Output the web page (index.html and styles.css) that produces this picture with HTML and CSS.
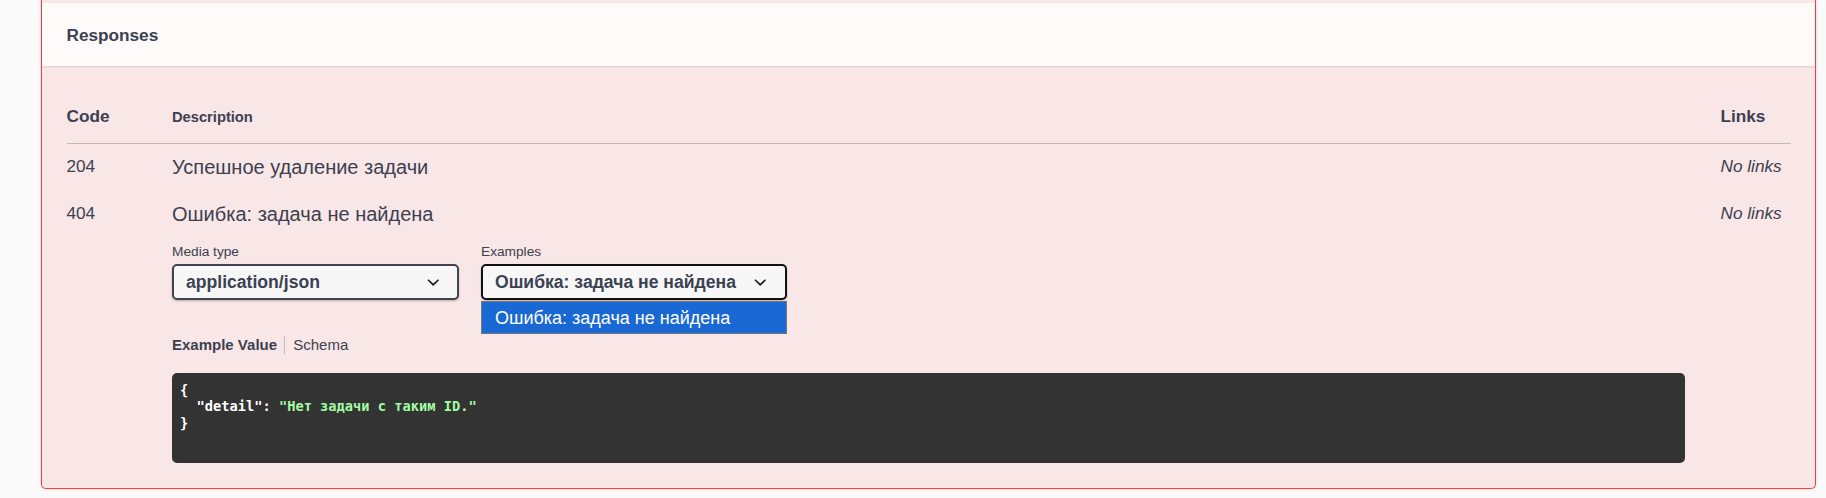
FILE: index.html
```html
<!DOCTYPE html>
<html lang="ru">
<head>
<meta charset="utf-8">
<title>Responses</title>
<link rel="stylesheet" href="styles.css">
</head>
<body>
<div class="card">
  <div class="section-header"><h4 class="title">Responses</h4></div>
  <div class="responses">
    <div class="row head">
      <div class="col-code">Code</div>
      <div class="col-desc">Description</div>
      <div class="col-links">Links</div>
    </div>
    <div class="row">
      <div class="col-code">204</div>
      <div class="col-desc"><p class="desc">Успешное удаление задачи</p></div>
      <div class="col-links"><i class="nolinks">No links</i></div>
    </div>
    <div class="row">
      <div class="col-code">404</div>
      <div class="col-desc">
        <p class="desc">Ошибка: задача не найдена</p>
        <div class="controls">
          <div class="control">
            <div class="label">Media type</div>
            <div class="select media">
              <span>application/json</span>
              <svg class="chev" viewBox="0 0 20 20" width="24.5" height="24.5"><path d="M13.418 7.859a.695.695 0 01.978 0 .68.68 0 010 .969l-3.908 3.83a.697.697 0 01-.979 0l-3.908-3.83a.68.68 0 010-.969.695.695 0 01.978 0L10 11l3.418-3.141z"/></svg>
            </div>
          </div>
          <div class="control examples-control">
            <div class="label">Examples</div>
            <div class="select examples">
              <span>Ошибка: задача не найдена</span>
              <svg class="chev" viewBox="0 0 20 20" width="24.5" height="24.5"><path d="M13.418 7.859a.695.695 0 01.978 0 .68.68 0 010 .969l-3.908 3.83a.697.697 0 01-.979 0l-3.908-3.83a.68.68 0 010-.969.695.695 0 01.978 0L10 11l3.418-3.141z"/></svg>
            </div>
            <div class="dropdown">Ошибка: задача не найдена</div>
          </div>
        </div>
        <div class="tabs">
          <span class="tab active">Example Value</span>
          <span class="sep"></span>
          <span class="tab">Schema</span>
        </div>
<pre class="code">{
  <span class="k">"detail"</span>: <span class="s">"Нет задачи с таким ID."</span>
}</pre>
      </div>
      <div class="col-links"><i class="nolinks">No links</i></div>
    </div>
  </div>
</div>
</body>
</html>
```

FILE: styles.css
```css
html, body {
  margin: 0;
  padding: 0;
  background: #fafafa;
}

body {
  font-family: "Liberation Sans", Arial, sans-serif;
  color: #3b4151;
  height: 498px;
  overflow: hidden;
}

.card {
  margin: 0 0 0 41px;
  width: 1775px;
  box-sizing: border-box;
  padding-top: 3px;
  background: rgba(249, 62, 62, 0.1);
  border: 1px solid #f93e3e;
  border-top: none;
  border-radius: 0 0 5px 5px;
  box-shadow: 0 0 3px rgba(0, 0, 0, 0.19);
}

.section-header {
  height: 63px;
  box-sizing: border-box;
  display: flex;
  align-items: center;
  padding: 0 24.5px;
  background: rgba(255, 255, 255, 0.8);
  box-shadow: 0 1px 2px rgba(0, 0, 0, 0.1);
}

.title {
  margin: 0;
  font-size: 17.2px;
  font-weight: 700;
  line-height: 20px;
}

.responses {
  padding: 0 24.5px 13.25px;
}

.row {
  display: grid;
  grid-template-columns: 105.5px 1fr 70px;
  align-items: start;
  padding: 12px 0;
}

.row.head {
  align-items: baseline;
  padding: 40px 0 16px;
  border-bottom: 1px solid #c5b8bb;
}

.col-code {
  font-size: 17.2px;
  line-height: 20px;
}

.head .col-code,
.head .col-links {
  font-weight: 700;
}

.head .col-desc {
  font-size: 14.7px;
  line-height: 20px;
  font-weight: 700;
}

.head .col-links {
  font-size: 17.2px;
  line-height: 20px;
}

.nolinks {
  font-size: 17.2px;
  line-height: 20px;
  font-style: italic;
}

.desc {
  margin: 0;
  font-size: 20px;
  line-height: 23px;
}

.controls {
  display: flex;
  gap: 22px;
  margin-top: 18.25px;
}

.control {
  position: relative;
}

.label {
  font-size: 13.7px;
  line-height: 16px;
  margin-bottom: 4px;
}

.select {
  height: 36px;
  box-sizing: border-box;
  display: flex;
  align-items: center;
  justify-content: space-between;
  padding: 0 12px;
  background: #f7f7f7;
  border: 2px solid #41444e;
  border-radius: 5px;
  box-shadow: 0 1px 2px 0 rgba(0, 0, 0, 0.25);
  font-size: 17.6px;
  font-weight: 700;
  line-height: 20px;
}

.select.media {
  width: 287px;
}

.select.examples {
  gap: 12.5px;
  border-color: #111;
}

.chev {
  display: block;
  flex: none;
  fill: #222;
}

.dropdown {
  position: absolute;
  top: 100%;
  left: 0;
  right: 0;
  margin-top: 1px;
  height: 33px;
  box-sizing: border-box;
  display: flex;
  align-items: center;
  padding-left: 13px;
  background: #1a68d3;
  border: 1px solid #767676;
  color: #fff;
  font-size: 18px;
  line-height: 20px;
}

.tabs {
  display: flex;
  align-items: stretch;
  margin-top: 36px;
  font-size: 15px;
  line-height: 18px;
}

.tab.active {
  font-weight: 700;
}

.sep {
  width: 1px;
  background: #c8b9b9;
  margin: 0 8.7px 0 6.5px;
}

.code {
  margin: 18.5px 0 0;
  width: 1513px;
  height: 90px;
  box-sizing: border-box;
  padding: 9px 8px 7px;
  background: #333;
  border-radius: 5px;
  color: #fff;
  font-family: "DejaVu Sans Mono", "Liberation Mono", monospace;
  font-weight: 700;
  font-size: 13.7px;
  line-height: 16.5px;
  white-space: pre;
}

.code .s {
  color: #a2fca2;
}
```
